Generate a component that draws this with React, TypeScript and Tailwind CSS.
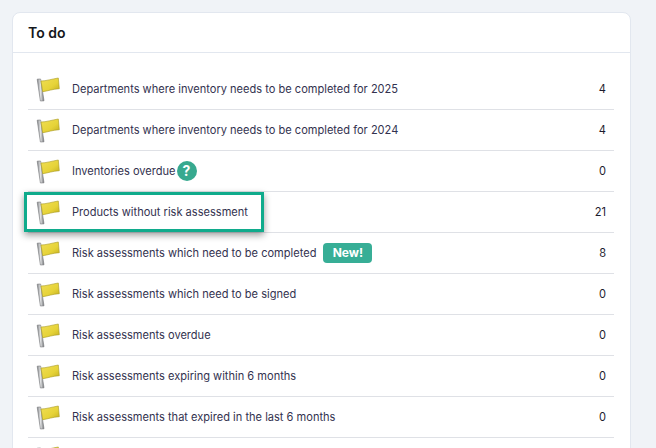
import React from "react";

function Flag() {
  const id = React.useId();
  return (
    <svg width="26" height="28" viewBox="0 0 26 28" className="shrink-0">
      <defs>
        <linearGradient id={id + "f"} x1="0" y1="0" x2="1" y2="1">
          <stop offset="0" stopColor="#f0de55" />
          <stop offset="0.6" stopColor="#e6d338" />
          <stop offset="1" stopColor="#c4b022" />
        </linearGradient>
        <linearGradient id={id + "p"} x1="0" y1="0" x2="1" y2="0">
          <stop offset="0" stopColor="#85878a" />
          <stop offset="0.5" stopColor="#e4e5e6" />
          <stop offset="1" stopColor="#6f7174" />
        </linearGradient>
      </defs>
      <path d="M1.2 4.2 L4.6 4 L8 25.8 L4.4 26 Z" fill={`url(#${id}p)`} stroke="#727477" strokeWidth="0.6" />
      <path d="M5 6 C10 6 16 4 22.3 3 L23.3 13.7 C17 14 12 16 6.7 16.7 Z" fill={`url(#${id}f)`} stroke="#a8981c" strokeWidth="0.6" />
    </svg>
  );
}

const rows: { t: string; n?: number; help?: boolean; isNew?: boolean }[] = [
  { t: "Departments where inventory needs to be completed for 2025", n: 4 },
  { t: "Departments where inventory needs to be completed for 2024", n: 4 },
  { t: "Inventories overdue", n: 0, help: true },
  { t: "Products without risk assessment", n: 21 },
  { t: "Risk assessments which need to be completed", n: 8, isNew: true },
  { t: "Risk assessments which need to be signed", n: 0 },
  { t: "Risk assessments overdue", n: 0 },
  { t: "Risk assessments expiring within 6 months", n: 0 },
  { t: "Risk assessments that expired in the last 6 months", n: 0 },
  { t: "" },
];

export default function App() {
  return (
    <div className="relative h-[448px] w-[656px] overflow-hidden bg-[#f0f3f7] pl-3 pr-[25px] pt-3 font-['Inter',sans-serif]">
      <div className="rounded-t-lg border border-[#e2e7ef] bg-white">
        <div className="flex h-[40px] items-center border-b border-[#e2e7ef] pl-[15px] text-sm font-semibold leading-none text-[#15171c]">
          To do
        </div>
        <div className="pl-[15px] pr-[16px] pt-[16px]">
          {rows.map((r, i) => (
            <div key={i} className="flex h-[41px] items-center border-b border-[#dfe1e6] text-[11.07px] text-[#33324f]">
              <div className="ml-[8px] mr-[10px] flex w-[26px] justify-center">
                <Flag />
              </div>
              <span>{r.t}</span>
              {r.help && (
                <span className="ml-[1px] flex h-[20px] w-[20px] items-center justify-center rounded-full bg-[#37a98f] text-[14px] font-bold leading-none text-white">
                  ?
                </span>
              )}
              {r.isNew && (
                <span className="ml-[7px] flex h-[20px] w-[49px] items-center justify-center rounded-[4px] bg-[#37ae96] text-xs font-bold text-white">
                  New!
                </span>
              )}
              <span className="ml-auto pr-[8px] text-[#1c1b2e]">{r.n}</span>
            </div>
          ))}
        </div>
      </div>
      <div className="absolute left-[24px] top-[192px] h-[40px] w-[240px] border-[3px] border-[#10ab8c] shadow-[0_3px_7px_rgba(0,0,0,0.4)]" />
    </div>
  );
}
